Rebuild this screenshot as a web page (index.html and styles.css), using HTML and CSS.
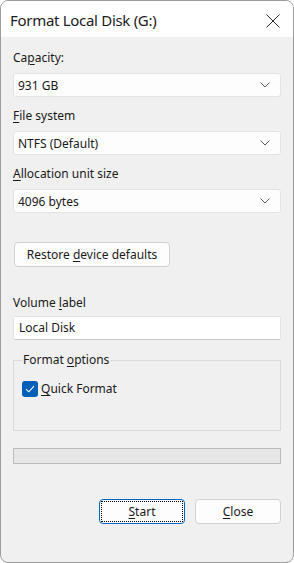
FILE: index.html
```html
<!DOCTYPE html>
<html>
<head>
<meta charset="utf-8">
<link rel="stylesheet" href="styles.css">
</head>
<body>
<div class="window">
  <div class="titlebar">
    <span class="title">Format Local Disk (G:)</span>
    <svg class="close" width="16" height="16" viewBox="0 0 16 16"><path d="M1.5 1.5 L14.5 14.5 M14.5 1.5 L1.5 14.5" stroke="#2a2a2a" stroke-width="1" fill="none"/></svg>
  </div>
  <div class="content">
    <div class="field first">
      <div class="label">Ca<u>p</u>acity:</div>
      <div class="combo"><span>931 GB</span><svg class="chev" width="10" height="6" viewBox="0 0 10 6"><path d="M0.5 0.5 L5 5 L9.5 0.5" stroke="#5a5a5a" stroke-width="1" fill="none"/></svg></div>
    </div>
    <div class="field">
      <div class="label"><u>F</u>ile system</div>
      <div class="combo"><span>NTFS (Default)</span><svg class="chev" width="10" height="6" viewBox="0 0 10 6"><path d="M0.5 0.5 L5 5 L9.5 0.5" stroke="#5a5a5a" stroke-width="1" fill="none"/></svg></div>
    </div>
    <div class="field">
      <div class="label"><u>A</u>llocation unit size</div>
      <div class="combo"><span>4096 bytes</span><svg class="chev" width="10" height="6" viewBox="0 0 10 6"><path d="M0.5 0.5 L5 5 L9.5 0.5" stroke="#5a5a5a" stroke-width="1" fill="none"/></svg></div>
    </div>
    <div class="restore-row">
      <div class="btn restore"><span>Restore <u>d</u>evice defaults</span></div>
    </div>
    <div class="field volume">
      <div class="label">Volume <u>l</u>abel</div>
      <div class="textbox">Local Disk</div>
    </div>
    <fieldset class="group">
      <legend>Format <u>o</u>ptions</legend>
      <div class="check-row">
        <span class="checkbox"><svg width="10" height="8" viewBox="0 0 10 8"><path d="M1 4.2 L3.8 6.8 L9 1.2" stroke="#fff" stroke-width="1.1" fill="none"/></svg></span>
        <span class="check-label"><u>Q</u>uick Format</span>
      </div>
    </fieldset>
    <div class="progress"></div>
    <div class="actions">
      <div class="btn start"><span class="focus"><span><u>S</u>tart</span></span></div>
      <div class="btn"><span><u>C</u>lose</span></div>
    </div>
  </div>
</div>
</body>
</html>
```

FILE: styles.css
```css
html, body {
  margin: 0;
  padding: 0;
  background: #ffffff;
}
body {
  font-family: "Noto Sans", "Open Sans", sans-serif;
  font-size: 12px;
  color: #1a1a1a;
}
.window {
  width: 294px;
  height: 563px;
  box-sizing: border-box;
  border: 1px solid #9c9c9c;
  border-radius: 8px;
  background: #f0f0f0;
  overflow: hidden;
  display: flex;
  flex-direction: column;
}
.titlebar {
  height: 36px;
  background: #ffffff;
  display: flex;
  align-items: center;
  justify-content: space-between;
  padding: 0 12px 0 9px;
  flex-shrink: 0;
}
.title {
  font-size: 15px;
  color: #1b1b1b;
  letter-spacing: -0.3px;
  margin-top: 2px;
}
.close {
  display: block;
  margin-top: 4px;
}
.content {
  padding: 0 12px;
  display: flex;
  flex-direction: column;
}
u {
  text-decoration-thickness: 1px;
  text-underline-offset: 2px;
}
.label {
  height: 16px;
  line-height: 16px;
}
.field {
  display: flex;
  flex-direction: column;
  gap: 7px;
  margin-top: 11px;
}
.field.first {
  margin-top: 13px;
}
.combo {
  height: 24px;
  box-sizing: border-box;
  background: #fdfdfd;
  border: 1px solid #e3e3e3;
  border-radius: 3px;
  display: flex;
  align-items: center;
  justify-content: space-between;
  padding: 0 10px 0 4px;
}
.chev {
  display: block;
}
.restore-row {
  display: flex;
  margin-top: 29px;
}
.btn {
  height: 25px;
  box-sizing: border-box;
  background: #fdfdfd;
  border: 1px solid #d0d0d0;
  border-radius: 4px;
  display: flex;
  align-items: center;
  justify-content: center;
}
.restore {
  width: 156px;
  margin-left: 1px;
}
.volume {
  margin-top: 28px;
  gap: 5px;
}
.textbox {
  height: 24px;
  box-sizing: border-box;
  background: #ffffff;
  border: 1px solid #e3e3e3;
  border-bottom-color: #c8c8c8;
  border-radius: 2px;
  padding: 0 5px;
  line-height: 22px;
}
.group {
  margin: 12px 0 0 0;
  padding: 0 8px;
  height: 79px;
  box-sizing: border-box;
  border: 1px solid #dadada;
  border-radius: 0;
  min-width: 0;
}
.group legend {
  padding: 0 1px;
  line-height: 16px;
}
.check-row {
  display: flex;
  align-items: center;
  gap: 3px;
  margin-top: 12px;
}
.checkbox {
  width: 16px;
  height: 16px;
  box-sizing: border-box;
  background: #005fb8;
  border-radius: 3px;
  display: flex;
  align-items: center;
  justify-content: center;
}
.checkbox svg {
  display: block;
}
.progress {
  margin-top: 17px;
  height: 16px;
  box-sizing: border-box;
  background: #e6e6e6;
  border: 1px solid #bcbcbc;
}
.actions {
  margin-top: 35px;
  display: flex;
  justify-content: flex-end;
  gap: 10px;
}
.actions .btn {
  width: 86px;
}
.btn.start {
  border: 1px solid #0067c0;
  padding: 1px;
}
.btn.start .focus {
  width: 100%;
  height: 100%;
  box-sizing: border-box;
  border: 1px dotted #000;
  display: flex;
  align-items: center;
  justify-content: center;
}
```
